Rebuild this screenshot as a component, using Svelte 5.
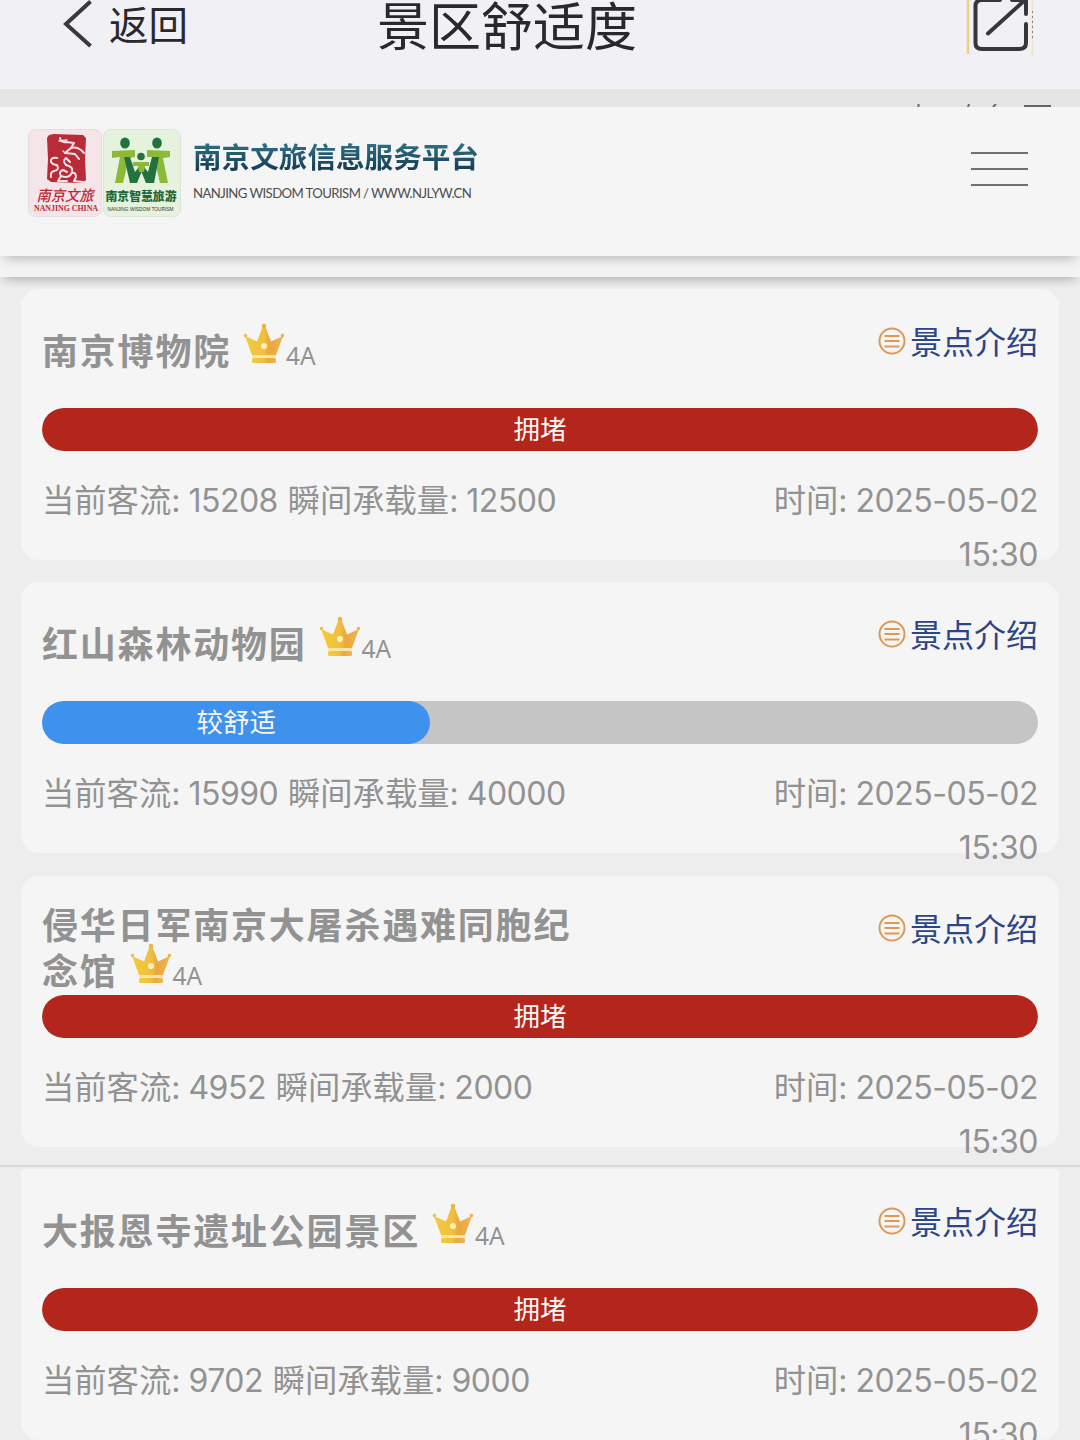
<script>
  let spots = [
    { name: '南京博物院', level: '4A', flow: 15208, capacity: 12500, status: '拥堵', color: 'red', percent: 100 },
    { name: '红山森林动物园', level: '4A', flow: 15990, capacity: 40000, status: '较舒适', color: 'blue', percent: 39 },
    { name: '侵华日军南京大屠杀遇难同胞纪念馆', level: '4A', flow: 4952, capacity: 2000, status: '拥堵', color: 'red', percent: 100 },
    { name: '大报恩寺遗址公园景区', level: '4A', flow: 9702, capacity: 9000, status: '拥堵', color: 'red', percent: 100 }
  ];
  let date = '2025-05-02';
  let time = '15:30';

  function isLong(name) {
    return name.length > 14;
  }
</script>

<div class="page">
  <header class="topbar">
    <div class="back">
      <svg width="30" height="48" viewBox="0 0 30 48" fill="none" stroke="#3a3a3e" stroke-width="4">
        <path d="M28.500 1.500L4 24L28.500 46" />
      </svg>
      <span>返回</span>
    </div>
    <h1>景区舒适度</h1>
    <svg class="share" width="68" height="56" viewBox="0 0 68 56" fill="none">
      <path d="M2 0V54" stroke="#f0cf86" stroke-width="2.500" />
      <path d="M66.500 0V55" stroke="#f3e3bd" stroke-width="1.500" />
      <path d="M66.500 11V38" stroke="#85827c" stroke-width="1" stroke-dasharray="2 3" />
      <g stroke="#37373b" stroke-width="4" stroke-linecap="round">
        <path d="M34 0H16Q9.500 0 9.500 6V43Q9.500 49 16 49H53Q60 49 60 43V24" />
        <path d="M46 0H60V14" />
        <path d="M22 33.500L59 0" />
      </g>
    </svg>
  </header>

  <div class="band">
    <svg width="140" height="3" viewBox="0 0 140 3" fill="none" stroke="#66666a" stroke-width="2">
      <path d="M7.500 0V3M58 0L57 3M85 0L82 3M113 2H141" />
    </svg>
  </div>

  <div class="site">
    <div class="logos">
      <svg width="74" height="88" viewBox="0 0 74 88">
        <rect x="0.500" y="0.500" width="73" height="87" rx="7" fill="#f5e4e8" stroke="#e6dddf" />
        <path d="M21 6L26 5L55 6L58 9L57 30L58 51L54 54L23 53L19 50L20 30L19 9Z" fill="#b92b38" />
        <g fill="none" stroke="#f7e3e6" stroke-linecap="round" stroke-linejoin="round">
          <path d="M32 9Q33 14 38 13L46 14L43 19L37 24L47 25L51 30M43 19Q50 17 56 24" stroke-width="2" />
          <path d="M31 12L39 11M37 24L35 22" stroke-width="1.300" />
          <path d="M29 29Q22 28 23 33Q25 36 29 36Q32 41 26 42Q22 43 23 48" stroke-width="2" />
          <path d="M38 29Q34 32 38 36Q46 38 44 43Q42 50 33 47Q30 43 35 41L39 43M38 29L42 33M44 44Q48 43 48 48L46 52L55 53M33 47L30 52H39" stroke-width="2" />
        </g>
        <text class="brush" x="37" y="72" text-anchor="middle" textLength="57" lengthAdjust="spacingAndGlyphs">南京文旅</text>
        <text class="china" x="38" y="82" text-anchor="middle" textLength="64" lengthAdjust="spacingAndGlyphs">NANJING CHINA</text>
      </svg>
      <svg width="78" height="88" viewBox="0 0 78 88">
        <rect x="0.500" y="0.500" width="77" height="87" rx="7" fill="#e5f2dd" stroke="#dbe5d8" />
        <g fill="#8cba37">
          <path d="M9 22L32 21V28L26 29L20 54H12L17 28L9 29Z" />
          <path d="M44 21L67 22V28L60 29L65 54H57L51 28L44 28Z" />
        </g>
        <g fill="#23713c">
          <ellipse cx="22" cy="14" rx="4.800" ry="5.600" />
          <ellipse cx="54" cy="14" rx="4.800" ry="5.600" />
          <circle cx="38" cy="27.500" r="3.800" />
          <path d="M21 28H27L32 43L36 38H41L45 43L49 28H56L51 54H43L38.500 43L34 54H27Z" />
        </g>
        <path d="M30 33H46V37H42L41 43H36L35 37H30Z" fill="#8cba37" />
        <text class="wisdom" x="38" y="72" text-anchor="middle" textLength="71" lengthAdjust="spacingAndGlyphs">南京智慧旅游</text>
        <text class="tiny" x="37.500" y="82" text-anchor="middle" textLength="66" lengthAdjust="spacingAndGlyphs">NANJING WISDOM TOURISM</text>
      </svg>
    </div>
    <div class="brand">
      <strong>南京文旅信息服务平台</strong>
      <small>NANJING WISDOM TOURISM / WWW.NJLYW.CN</small>
    </div>
    <div class="menu"><i></i><i></i><i></i></div>
  </div>
  <div class="strip"></div>

  <main>
    {#each spots as spot, i}
      {#if i === 3}
        <div class="seam"></div>
      {/if}
      <section class="card" class:joined={i === 3}>
        <div class="head" class:long={isLong(spot.name)}>
          <h2>{spot.name}<svg class="crown" width="42" height="42" viewBox="0 0 42 42">
              <defs>
                <linearGradient id="gold" x1="0" x2="1">
                  <stop offset="0" stop-color="#f2cc38" />
                  <stop offset="0.500" stop-color="#f0bf42" />
                  <stop offset="0.650" stop-color="#eaa83a" />
                  <stop offset="1" stop-color="#edb458" />
                </linearGradient>
              </defs>
              <path d="M2 13L14 18.500L19.500 4H22.500L28 18.500L40 13L33 32H9Z" fill="url(#gold)" />
              <circle cx="21" cy="3" r="2.300" fill="#edb43e" />
              <circle cx="2.500" cy="12.500" r="1.800" fill="#edbf52" />
              <circle cx="39.500" cy="12.500" r="1.800" fill="#edb252" />
              <circle cx="21" cy="23" r="3" fill="#fff1bd" />
              <path d="M9 32H33V35H9Z" fill="#f8e4a5" />
              <rect x="9" y="35" width="24" height="5" rx="1.500" fill="url(#gold)" />
            </svg><span class="level">{spot.level}</span></h2>
          <a class="intro" href="#intro">
            <svg width="28" height="28" viewBox="0 0 28 28" fill="none" stroke="#dc9956" stroke-width="2">
              <circle cx="14" cy="14" r="12.500" />
              <path d="M6.500 9H21.500M6.500 14H21.500M6.500 19.500H21.500" />
            </svg>
            <span>景点介绍</span>
          </a>
        </div>
        <div class="track">
          <div class="fill {spot.color}" style="width: {spot.percent}%">{spot.status}</div>
        </div>
        <div class="info">
          <p>当前客流<b>: {spot.flow}</b> 瞬间承载量<b>: {spot.capacity}</b></p>
          <p class="when">时间<b>: {date}</b><br /><b>{time}</b></p>
        </div>
      </section>
    {/each}
  </main>
</div>

<style>
  :global(body) {
    margin: 0;
    background: #ededed;
  }

  * {
    box-sizing: border-box;
  }

  .page {
    width: 1080px;
    height: 1440px;
    overflow: hidden;
    background: #ededed;
    font-family: "Noto Sans CJK SC", sans-serif;
    color: #929292;
  }

  h1, h2, p {
    margin: 0;
    font-weight: 400;
  }

  .topbar {
    display: grid;
    grid-template-columns: 315px 1fr 113px;
    height: 89px;
    padding-left: 62px;
    background: #f1f0f5;
    color: #29292d;
  }

  .back {
    display: flex;
    align-items: center;
    gap: 17px;
    height: 48px;
    font-size: 39.5px;
  }

  .back span {
    height: 48px;
    line-height: 45px;
  }

  .topbar h1 {
    height: 50px;
    font-size: 52px;
    line-height: 48px;
  }

  .share {
    justify-self: start;
    margin-left: -1px;
  }

  .band {
    display: flex;
    align-items: flex-end;
    justify-content: flex-end;
    height: 18px;
    padding-right: 29px;
    background: #e4e4e4;
  }

  .site {
    position: relative;
    z-index: 2;
    display: flex;
    align-items: flex-start;
    height: 149px;
    padding: 22px 52px 0 28px;
    background: #f5f5f5;
    box-shadow: 0 8px 10px -5px rgba(0, 0, 0, 0.24);
  }

  .logos {
    display: flex;
    gap: 1px;
  }

  .logos text {
    font-family: "Noto Sans CJK SC", sans-serif;
    font-weight: 700;
  }

  .logos .brush {
    fill: #b92b38;
    font-size: 15px;
    font-style: italic;
    font-weight: 500;
  }

  .logos .china {
    fill: #b92b38;
    font-family: "Liberation Serif", serif;
    font-size: 8.5px;
  }

  .logos .wisdom {
    fill: #23663a;
    font-size: 12px;
    font-weight: 900;
  }

  .logos .tiny {
    fill: #333;
    font-family: "Liberation Sans", sans-serif;
    font-size: 5px;
    font-weight: 400;
  }

  .brand {
    display: flex;
    flex-direction: column;
    flex: 1;
    margin-left: 12px;
  }

  .brand strong {
    align-self: flex-start;
    font-size: 28.6px;
    line-height: 54px;
    font-weight: 700;
    color: transparent;
    background: linear-gradient(#2f7186 25%, #173f56 75%);
    background-clip: text;
  }

  .brand small {
    margin-top: 1px;
    font-family: Lato, sans-serif;
    font-size: 13.2px;
    line-height: 18px;
    letter-spacing: -0.6px;
    color: #4e4e4e;
  }

  .menu {
    display: flex;
    flex-direction: column;
    gap: 14px;
    width: 57px;
    padding-top: 23px;
  }

  .menu i {
    height: 2px;
    background: #707070;
  }

  .strip {
    position: relative;
    z-index: 1;
    height: 21px;
    background: #f3f3f3;
    box-shadow: 0 7px 10px -4px rgba(0, 0, 0, 0.24);
  }

  main {
    padding: 12px 21px 0;
  }

  .card {
    height: 271px;
    margin-bottom: 22.3px;
    padding: 0 21px;
    border-radius: 18px;
    background: #f5f5f5;
  }

  .card.joined {
    border-radius: 0 0 18px 18px;
  }

  .seam {
    height: 4px;
    margin: -4px -21px 0;
    border-top: 2px solid #d9d9d9;
    background: #ececec;
  }

  .head {
    display: flex;
    justify-content: space-between;
    height: 119px;
    padding-top: 37px;
  }

  .head.long {
    padding-top: 24px;
  }

  .head h2 {
    width: 560px;
    font-size: 36px;
    line-height: 46px;
    letter-spacing: 1.8px;
    font-weight: 700;
    color: #929292;
  }

  .crown {
    margin: -12px 1px 0 12px;
    vertical-align: 0;
  }

  .level {
    font-family: "Noto Sans", sans-serif;
    font-size: 24.5px;
    letter-spacing: 0;
    font-weight: 400;
  }

  .intro {
    display: flex;
    align-items: center;
    gap: 4px;
    height: 32px;
    margin-top: -1px;
    font-size: 32px;
    color: #2b4585;
    text-decoration: none;
  }

  .intro span {
    line-height: 32px;
    padding-bottom: 2px;
  }

  .long .intro {
    margin-top: 12px;
  }

  .track {
    height: 43px;
    overflow: hidden;
    border-radius: 22px;
    background: #c5c5c5;
  }

  .fill {
    height: 43px;
    border-radius: 22px;
    font-size: 26.5px;
    line-height: 40px;
    text-align: center;
    color: #f5f5f5;
  }

  .red {
    background: #b4261c;
  }

  .blue {
    background: #3f91ee;
  }

  .info {
    display: flex;
    justify-content: space-between;
    padding-top: 20px;
    font-size: 32.3px;
    line-height: 54px;
    word-spacing: 2.5px;
    white-space: nowrap;
  }

  .info b {
    font-family: Inter, sans-serif;
    font-size: 32px;
    line-height: 30px;
    letter-spacing: -0.5px;
    word-spacing: 0;
    font-weight: 400;
  }

  .when {
    text-align: right;
  }
</style>
